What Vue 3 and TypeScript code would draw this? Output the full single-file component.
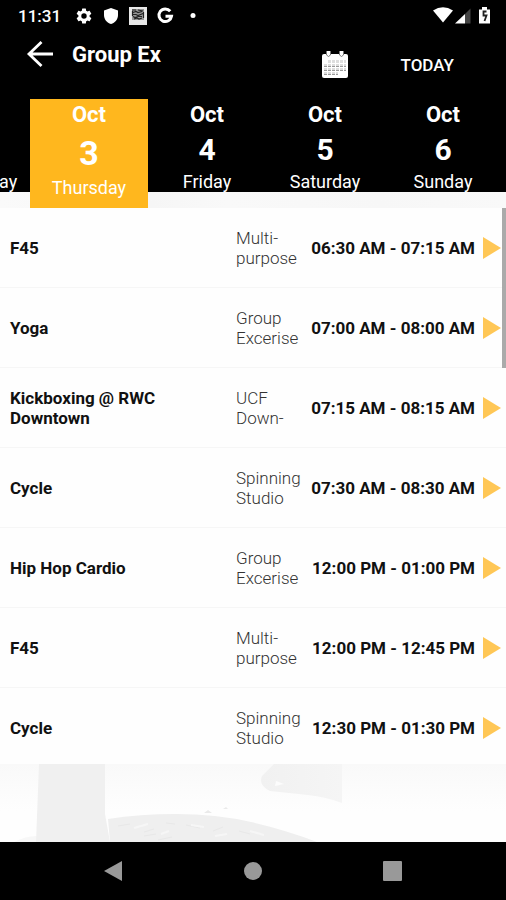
<script setup lang="ts">
import { ref } from 'vue'

interface Day {
  month: string
  date: number
  weekday: string
}

interface Session {
  name: string
  place: string
  time: string
}

const days: Day[] = [
  { month: 'Oct', date: 2, weekday: 'Wednesday' },
  { month: 'Oct', date: 3, weekday: 'Thursday' },
  { month: 'Oct', date: 4, weekday: 'Friday' },
  { month: 'Oct', date: 5, weekday: 'Saturday' },
  { month: 'Oct', date: 6, weekday: 'Sunday' },
]

const selected = ref<number>(3)

const sessions: Session[] = [
  { name: 'F45', place: 'Multi-purpose', time: '06:30 AM - 07:15 AM' },
  { name: 'Yoga', place: 'Group Excerise', time: '07:00 AM - 08:00 AM' },
  { name: 'Kickboxing @ RWC Downtown', place: 'UCF Down-', time: '07:15 AM - 08:15 AM' },
  { name: 'Cycle', place: 'Spinning Studio', time: '07:30 AM - 08:30 AM' },
  { name: 'Hip Hop Cardio', place: 'Group Excerise', time: '12:00 PM - 01:00 PM' },
  { name: 'F45', place: 'Multi-purpose', time: '12:00 PM - 12:45 PM' },
  { name: 'Cycle', place: 'Spinning Studio', time: '12:30 PM - 01:30 PM' },
]
</script>

<template>
  <div class="screen">
    <div class="status">
      <span class="clock">11:31</span>
      <svg class="s-icon" viewBox="0 0 24 24" aria-hidden="true">
        <path fill="#fff" d="M19.4 13c.04-.3.07-.66.07-1s-.03-.7-.07-1l2.1-1.65c.2-.15.25-.42.13-.64l-2-3.46c-.12-.22-.4-.3-.6-.22l-2.5 1c-.52-.4-1.08-.73-1.7-.98l-.37-2.65A.5.5 0 0 0 14 2h-4a.5.5 0 0 0-.5.42l-.37 2.65c-.62.25-1.18.6-1.7.98l-2.5-1c-.22-.08-.48 0-.6.22l-2 3.46c-.13.22-.07.5.12.64L4.57 11c-.04.3-.07.67-.07 1s.03.7.07 1l-2.12 1.65c-.19.15-.25.42-.12.64l2 3.46c.12.22.38.3.6.22l2.5-1c.52.4 1.08.73 1.7.98l.37 2.65c.04.24.25.4.5.4h4c.25 0 .46-.16.5-.4l.37-2.65c.62-.25 1.18-.6 1.7-.98l2.5 1c.22.08.48 0 .6-.22l2-3.46c.12-.22.07-.5-.13-.64zM12 15.600a3.600 3.600 0 1 1 0-7.200 3.600 3.600 0 0 1 0 7.200z" />
      </svg>
      <svg class="s-icon" viewBox="0 0 18 18" aria-hidden="true">
        <path fill="#fff" d="M9 1 16 3.500V8c0 4.300-2.900 7.800-7 9-4.100-1.200-7-4.700-7-9V3.500z" />
      </svg>
      <svg class="s-icon" viewBox="0 0 18 18" aria-hidden="true">
        <path fill="#e8e8e8" d="M0 0h18v18H0z" />
        <path fill="#999" d="M3 2h12v11H3z" />
        <path fill="none" stroke="#222" stroke-width="1.200" d="M3 3h4M9 3l5 1M4 5.500l3-1 2 1 4-1M4 7.500h3l2 1 5-2M4 9.500l2 1 3-1h4M5 12l3-1 2 1 3-1M3.500 4v5M14.500 5v6" />
      </svg>
      <svg class="s-icon" viewBox="0 0 18 18" aria-hidden="true">
        <path fill="none" stroke="#fff" stroke-width="3" d="M14.200 4.300A6.300 6.300 0 1 0 15.500 9.200H9.500" />
      </svg>
      <svg class="s-icon" viewBox="0 0 18 18" aria-hidden="true">
        <circle cx="10" cy="8.500" r="2.500" fill="#fff" />
      </svg>
      <span class="spacer"></span>
      <svg class="signals" viewBox="0 0 58 18" aria-hidden="true">
        <path fill="#fff" d="M0 3.500Q10-3 20 3.500L10 15.500z" />
        <path fill="#fff" d="M22 16.500 32 7v9.500z" />
        <path fill="#444" d="M32 7l5.500-5.500v15H32z" />
        <path fill="#fff" d="M46 2.500h3V0h5v2.500h3v14H46z" />
        <path fill="none" stroke="#222" stroke-width="1.800" d="M53.500 4.500h-3v4h3l-2 5.500" />
      </svg>
    </div>

    <header class="bar">
      <button class="back" type="button" aria-label="Back">
        <svg width="28" height="28" viewBox="0 0 28 28">
          <path fill="none" stroke="#fff" stroke-width="2.800" d="M27 14H3M15.500 2 3 14l12.500 12" />
        </svg>
      </button>
      <h1>Group Ex</h1>
      <button class="cal" type="button" aria-label="Choose date">
        <svg width="28" height="28" viewBox="0 0 28 28">
          <path fill="#fff" d="M3 3h22q2 0 2 2v20q0 2-2 2H3q-2 0-2-2V5q0-2 2-2z" />
          <path stroke="#777" fill="#fff" d="M5.500 0v4q2 3 4 0V0M18.500 0v4q2 3 4 0V0" />
          <path fill="#ddd" d="M7 9h18v12H17v3H3V13h4z" />
          <path fill="none" stroke="#fff" d="M7 12.500h18M3 16.500h22M3 20.500h22M6.500 9v15M10.500 9v15M14.500 9v15M18.500 9v12M22.500 9v12" />
          <path fill="none" stroke="#999" stroke-dasharray="3 1" d="M3 15.500h22M3 19.500h22M3 23.500h14" />
        </svg>
      </button>
      <button class="today" type="button">TODAY</button>
    </header>

    <nav class="days" aria-label="Days">
      <div class="track">
        <button
          v-for="day in days"
          :key="day.date"
          type="button"
          class="day"
          :class="{ active: day.date === selected }"
          @click="selected = day.date"
        >
          <span class="month">{{ day.month }}</span>
          <span class="date">{{ day.date }}</span>
          <span class="weekday">{{ day.weekday }}</span>
        </button>
      </div>
    </nav>

    <main class="list">
      <ul>
        <li v-for="(s, i) in sessions" :key="i">
          <span class="name">{{ s.name }}</span>
          <span class="place">{{ s.place }}</span>
          <span class="time">{{ s.time }}</span>
          <button class="open" type="button" :aria-label="'Open ' + s.name">
            <svg width="18" height="22" viewBox="0 0 18 22"><path fill="#ffc756" d="M0 0l18 11L0 22z" /></svg>
          </button>
        </li>
      </ul>
      <div class="thumb"></div>
    </main>

    <svg class="art" viewBox="0 0 506 78" preserveAspectRatio="none" aria-hidden="true">
      <defs>
        <linearGradient id="haze" x1="0" y1="0" x2="0" y2="1">
          <stop offset="0" stop-color="#f9f9f9" />
          <stop offset="0.600" stop-color="#fefefe" />
          <stop offset="1" stop-color="#fefefe" />
        </linearGradient>
        <linearGradient id="cone" x1="0" y1="0" x2="1" y2="0">
          <stop offset="0" stop-color="#f1f1f1" />
          <stop offset="1" stop-color="#f5f5f5" />
        </linearGradient>
      </defs>
      <path fill="url(#haze)" d="M0 0h506v78H0z" />
      <path fill="#f7f7f7" d="M14 78q12-6 22-6h70v6z" />
      <path fill="#f0f0f0" d="M39 0h66v50l5 28H36z" />
      <path fill="#efefef" d="M108 55q32-5 68-5 40 0 75 8 35 8 66 20H110z" />
      <path fill="none" stroke="#e8e8e8" d="M118 62l12-2m14 8 10-3m12-6 9 1m-31 12 12-2m30-9 14 3m13 3 10-4m16 4 11 3m-92 6 14-3" />
      <path fill="none" stroke="#f6f6f6" stroke-width="2" d="M134 64l14-4m13 10 8-3m22-6 13 2m11 9 12-2m23-3 14 4" />
      <path fill="#eaeaea" d="M204 49l4-3 4 3zM223 45l3-2 2 2z" />
      <path fill="url(#cone)" d="M274 0h68v39q-16-6-34-8l-38-4q-12-6-8-15z" />
      <path fill="#fcfcfc" d="M276 17l8 3-9 2z" />
    </svg>

    <footer class="nav">
      <button type="button" aria-label="Back">
        <svg width="20" height="22" viewBox="0 0 20 22"><path fill="#999" d="M19 1v20L1 11z" /></svg>
      </button>
      <button type="button" aria-label="Home">
        <svg width="20" height="22" viewBox="0 0 20 22"><circle cx="10" cy="11" r="9" fill="#999" /></svg>
      </button>
      <button type="button" aria-label="Recents">
        <svg width="20" height="22" viewBox="0 0 20 22"><rect y="1" width="19" height="20" rx="1" fill="#999" /></svg>
      </button>
    </footer>
  </div>
</template>

<style>
body {
  margin: 0;
  background: #fff;
}
</style>

<style scoped>
.screen {
  display: flex;
  flex-direction: column;
  height: 100vh;
  overflow: hidden;
  font-family: Roboto, "Liberation Sans", sans-serif;
  background: #fefefe;
}
button {
  border: 0;
  padding: 0;
  margin: 0;
  background: none;
  color: inherit;
  font: inherit;
}
svg {
  display: block;
}
.status {
  display: flex;
  align-items: center;
  height: 32px;
  padding: 0 15px 0 18px;
  gap: 9px;
  background: #000;
  color: #fff;
}
.clock {
  font-size: 17px;
  font-weight: 500;
  line-height: 32px;
  margin-right: 5px;
}
.s-icon {
  width: 18px;
  height: 18px;
}
.spacer {
  flex: 1;
}
.signals {
  width: 58px;
  height: 18px;
}
.bar {
  display: flex;
  align-items: flex-start;
  height: 67px;
  padding: 0 52px 0 26px;
  background: #000;
  color: #fff;
}
.back {
  padding-top: 8px;
}
h1 {
  flex: 1;
  margin: 10px 0 0 18px;
  font-size: 22px;
  font-weight: 700;
  line-height: 26px;
}
.cal {
  margin: 19px 52px 0 0;
}
.today {
  margin-top: 20px;
  font-size: 17px;
  font-weight: 500;
  line-height: 26px;
}
.days {
  height: 109px;
  background: linear-gradient(#000 93px, transparent 93px),
    linear-gradient(90deg, #fafafa, #f6f6f6 30%, #f9f9f9 45%, #f7f7f7 75%, #f9f9f9);
}
.track {
  display: flex;
  align-items: flex-start;
  margin-left: -88px;
}
.day {
  display: flex;
  flex: none;
  flex-direction: column;
  align-items: center;
  width: 118px;
  height: 93px;
  padding-top: 3px;
  color: #fff;
}
.day.active {
  height: 109px;
  background: #ffb71e;
}
.month {
  font-size: 22px;
  font-weight: 700;
  line-height: 26px;
}
.date {
  font-size: 30px;
  font-weight: 700;
  line-height: 44px;
}
.weekday {
  font-size: 18px;
  line-height: 20px;
}
.active .date {
  font-size: 34px;
  line-height: 50px;
}
.active .weekday {
  line-height: 20px;
}
.list {
  position: relative;
  flex: 1;
  min-height: 0;
  overflow: hidden;
}
ul {
  margin: 0;
  padding: 0;
  list-style: none;
}
li {
  display: grid;
  grid-template-columns: 1fr 66px 165px 18px;
  column-gap: 8px;
  align-items: center;
  box-sizing: border-box;
  height: 80px;
  padding: 1px 5px 0 10px;
  border-bottom: 1px solid #f6f6f6;
  font-size: 17px;
  line-height: 20px;
}
.name,
.time {
  color: #111;
  font-weight: 700;
}
.time {
  text-align: right;
  white-space: nowrap;
}
.place {
  color: #333;
  font-weight: 300;
}
.thumb {
  position: absolute;
  top: 0;
  right: 0;
  width: 4px;
  height: 160px;
  background: #aaa;
}
.art {
  flex: none;
  width: 100%;
  height: 78px;
}
.nav {
  display: flex;
  flex: none;
  justify-content: center;
  align-items: center;
  height: 58px;
  background: #000;
}
.nav button {
  display: flex;
  flex: 0 1 140px;
  justify-content: center;
}
</style>
